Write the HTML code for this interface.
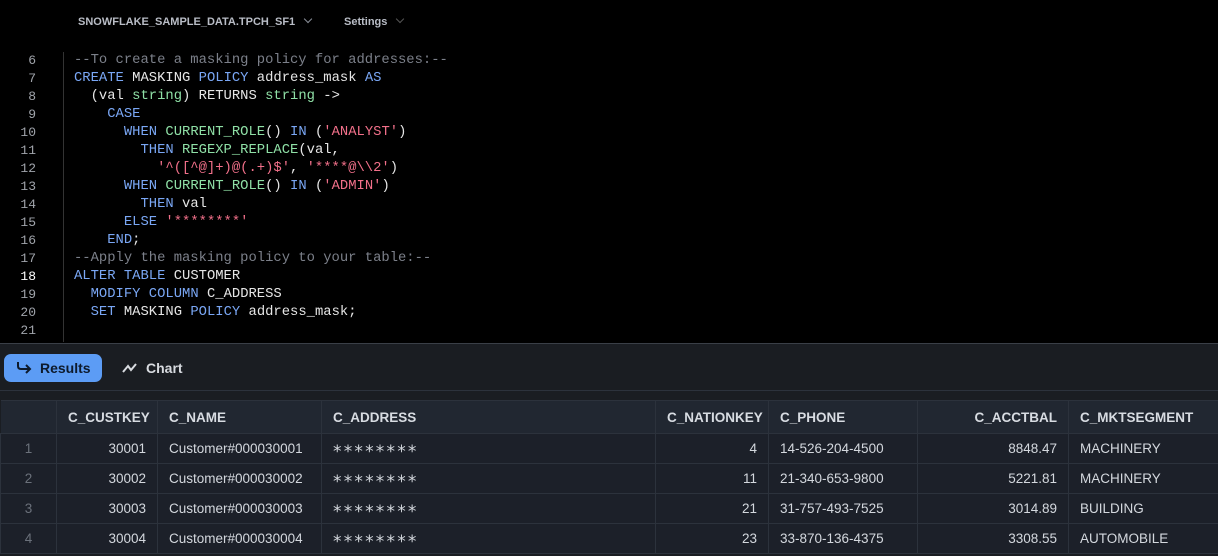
<!DOCTYPE html>
<html><head><style>
*{margin:0;padding:0;box-sizing:border-box}
body{width:1218px;height:556px;background:#000;overflow:hidden;font-family:"Liberation Sans",sans-serif;position:relative}
.top{position:absolute;top:16px;font-size:11px;color:#b9bdc6;font-weight:bold}
.chev{display:inline-block;width:6px;height:6px;border-right:1.3px solid #8a8f99;border-bottom:1.3px solid #8a8f99;transform:rotate(45deg);margin-left:10px;position:relative;top:-3px}
.gut{position:absolute;left:0;width:36px;text-align:right;font-family:"Liberation Mono",monospace;font-size:13px;color:#a0a4ab}
.code{position:absolute;left:74px;font-family:"Liberation Mono",monospace;font-size:13.85px;color:#e6e6e6;white-space:pre}
.k{color:#7aa7f5}.f{color:#8fe0a6}.s{color:#f2708a}.c{color:#7c808a}
.vl{position:absolute;left:63px;top:52px;width:1px;height:290px;background:#333}
.panel{position:absolute;left:0;top:343px;width:1218px;height:213px;background:#1a1d22;border-top:1px solid #3a3f47}
.btn{position:absolute;top:10px;left:4px;width:98px;height:28px;background:#5c9cf5;border-radius:7px;color:#0d1a2c;font-size:14px;font-weight:bold;padding:6px 0 0 36px}
.chart{position:absolute;top:16px;left:146px;color:#d8dbe0;font-size:14px;font-weight:bold}
.sep{position:absolute;top:46px;left:0;width:1218px;height:1px;background:#2c323c}
table{position:absolute;top:56px;left:0;width:1218px;border-collapse:collapse;table-layout:fixed;font-size:13.5px;color:#d4d8de}
td,th{border:1px solid #2c323c;padding:0 11px;height:30px;white-space:nowrap;overflow:hidden}
th{background:#212731;height:33px;text-align:left;color:#d8dce2;font-size:13.5px}
td{background:#1c2029}
.r{text-align:right}.n{color:#6b717b;text-align:center;padding:0}
.a{font-family:"DejaVu Sans",sans-serif;font-size:17px;letter-spacing:2.2px;position:relative;top:3px}
</style></head><body>
<div class="top" style="left:78px">SNOWFLAKE_SAMPLE_DATA.TPCH_SF1<span class="chev"></span></div>
<div class="top" style="left:344px">Settings<span class="chev" style="border-color:#555"></span></div>
<div class="vl"></div>
<div class="gut" style="top:52px;line-height:18px">6<br>7<br>8<br>9<br>10<br>11<br>12<br>13<br>14<br>15<br>16<br>17<br><span style="color:#fff">18</span><br>19<br>20<br>21</div>
<div class="code" style="top:51px;line-height:18px"><span class="c">--To create a masking policy for addresses:--</span>
<span class="k">CREATE</span> MASKING <span class="k">POLICY</span> address_mask <span class="k">AS</span>
  (val <span class="f">string</span>) RETURNS <span class="f">string</span> ->
    <span class="k">CASE</span>
      <span class="k">WHEN</span> <span class="f">CURRENT_ROLE</span>() <span class="k">IN</span> (<span class="s">'ANALYST'</span>)
        <span class="k">THEN</span> <span class="f">REGEXP_REPLACE</span>(val,
          <span class="s">'^([^@]+)@(.+)$'</span>, <span class="s">'****@\\2'</span>)
      <span class="k">WHEN</span> <span class="f">CURRENT_ROLE</span>() <span class="k">IN</span> (<span class="s">'ADMIN'</span>)
        <span class="k">THEN</span> val
      <span class="k">ELSE</span> <span class="s">'********'</span>
    <span class="k">END</span>;
<span class="c">--Apply the masking policy to your table:--</span>
<span class="k">ALTER</span> <span class="k">TABLE</span> CUSTOMER
  <span class="k">MODIFY</span> <span class="k">COLUMN</span> C_ADDRESS
  <span class="k">SET</span> MASKING <span class="k">POLICY</span> address_mask;
</div>
<div class="panel">
<div class="btn"><svg style="position:absolute;left:12px;top:8px" width="16" height="12" viewBox="0 0 16 12"><path d="M2 0v4q0 3 3 3h9M10 3l4 4-4 4" fill="none" stroke="#0d1a2c" stroke-width="2"/></svg>Results</div>
<div class="chart"><svg style="position:absolute;left:-24px;top:2px" width="16" height="12" viewBox="0 0 16 12"><path d="M1 10l5-6 3 4 5-6" fill="none" stroke="#d8dbe0" stroke-width="2"/></svg>Chart</div>
<div class="sep"></div>
<table>
<colgroup><col style="width:56px"><col style="width:101px"><col style="width:164px"><col style="width:334px"><col style="width:113px"><col style="width:149px"><col style="width:151px"><col style="width:150px"></colgroup>
<tr><th style="border-left:none"></th><th class="r">C_CUSTKEY</th><th>C_NAME</th><th>C_ADDRESS</th><th class="r">C_NATIONKEY</th><th>C_PHONE</th><th class="r">C_ACCTBAL</th><th style="border-right:none">C_MKTSEGMENT</th></tr>
<tr><td class="n">1</td><td class="r">30001</td><td>Customer#000030001</td><td><span class="a">********</span></td><td class="r">4</td><td>14-526-204-4500</td><td class="r">8848.47</td><td>MACHINERY</td></tr>
<tr><td class="n">2</td><td class="r">30002</td><td>Customer#000030002</td><td><span class="a">********</span></td><td class="r">11</td><td>21-340-653-9800</td><td class="r">5221.81</td><td>MACHINERY</td></tr>
<tr><td class="n">3</td><td class="r">30003</td><td>Customer#000030003</td><td><span class="a">********</span></td><td class="r">21</td><td>31-757-493-7525</td><td class="r">3014.89</td><td>BUILDING</td></tr>
<tr><td class="n">4</td><td class="r">30004</td><td>Customer#000030004</td><td><span class="a">********</span></td><td class="r">23</td><td>33-870-136-4375</td><td class="r">3308.55</td><td>AUTOMOBILE</td></tr>
</table>
</div>
</body></html>
